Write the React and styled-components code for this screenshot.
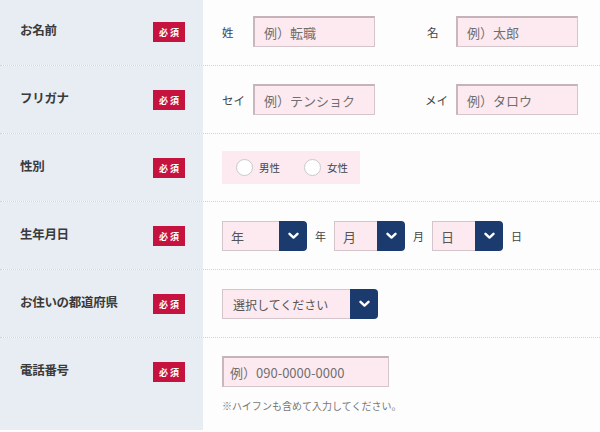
import React from "react";
import styled, { createGlobalStyle } from "styled-components";

const Global = createGlobalStyle`
  html, body { margin: 0; padding: 0; background: #fdfdfd; overflow: hidden; }
  body { font-family: "Noto Sans CJK JP", "Noto Sans", sans-serif; color: #333; }
  * { box-sizing: border-box; }
`;

const Form = styled.div`
  width: 600px;
  height: 432px;
  display: flex;
  flex-direction: column;
  margin-top: -2px;
`;

const Row = styled.div`
  display: flex;
  height: ${(p) => p.$h || 68}px;
  flex: ${(p) => (p.$grow ? 1 : "none")};
  border-bottom: ${(p) => (p.$last ? "none" : "1px dotted #cfd3d9")};
`;

const LabelCell = styled.div`
  width: 203px;
  flex: none;
  background: #e8edf4;
  display: flex;
  justify-content: space-between;
  align-items: flex-start;
  padding: 22px 18px 0 20px;
`;

const LabelText = styled.span`
  font-size: 12.5px;
  font-weight: 700;
  line-height: 20px;
  color: #3a3a3a;
  letter-spacing: -0.3px;
`;

const Badge = styled.span`
  width: 32px;
  height: 20px;
  margin-top: 2px;
  background: #c5123f;
  color: #fff;
  font-size: 9px;
  font-weight: 700;
  display: flex;
  align-items: center;
  justify-content: center;
  letter-spacing: 2px;
  padding-left: 2px;
`;

const FieldCell = styled.div`
  flex: 1;
  padding: 18px 0 0 19px;
  display: flex;
  flex-direction: column;
  align-items: flex-start;
`;

const Line = styled.div`
  display: flex;
  align-items: center;
  gap: ${(p) => p.$gap || 0}px;
`;

const Group = styled.div`
  display: flex;
  align-items: center;
`;

const Prefix = styled.span`
  width: 31px;
  font-size: 11.5px;
  color: #444;
  padding-left: ${(p) => p.$pl || 0}px;
`;

const TextBox = styled.div`
  width: ${(p) => p.$w}px;
  height: 31px;
  background: #fdeaf1;
  border: 1px solid #d5c6cc;
  border-top: 2px solid #c4b4ba;
  border-left: 2px solid #c8b8be;
  display: flex;
  align-items: center;
  padding-left: ${(p) => p.$pl || 8}px;
  font-size: 13px;
  color: #6f6f6f;
`;

const GenderBox = styled.div`
  width: 138px;
  height: 33px;
  margin-top: -1px;
  background: #fdeaf1;
  display: flex;
  align-items: center;
  padding-left: 14px;
  gap: 24px;
`;

const RadioItem = styled.label`
  display: flex;
  align-items: center;
  gap: 6px;
  font-size: 10.5px;
  color: #444;
`;

const Circle = styled.span`
  width: 17px;
  height: 17px;
  border-radius: 50%;
  background: #fff;
  border: 1px solid #c9c9c9;
`;

const Select = styled.div`
  display: flex;
  height: 30px;
  margin-top: 1px;
`;

const SelectFace = styled.div`
  width: ${(p) => p.$w}px;
  height: 30px;
  background: #fdeaf1;
  border: 1px solid #d3c5ca;
  border-right: none;
  display: flex;
  align-items: center;
  padding-left: ${(p) => p.$pl || 8}px;
  font-size: ${(p) => p.$fs || 13}px;
  color: #555;
`;

const Arrow = styled.div`
  width: 28px;
  height: 30px;
  background: #1b3a6d;
  border-radius: 0 4px 4px 0;
  display: flex;
  align-items: center;
  justify-content: center;
`;

const Unit = styled.span`
  font-size: 11px;
  color: #444;
  margin: 0 8px;
`;

const Note = styled.p`
  margin: 13px 0 0 0;
  font-size: 10px;
  color: #777;
  line-height: 12px;
`;

const Chevron = () => (
  <svg width="11" height="8" viewBox="0 0 11 8">
    <path d="M1.5 1.8 L5.5 5.6 L9.5 1.8" fill="none" stroke="#fff" strokeWidth="2.4" strokeLinecap="round" strokeLinejoin="round" />
  </svg>
);

const Label = ({ children }) => (
  <LabelCell>
    <LabelText>{children}</LabelText>
    <Badge>必須</Badge>
  </LabelCell>
);

const DateSelect = ({ text, w }) => (
  <Select>
    <SelectFace $w={w}>{text}</SelectFace>
    <Arrow>
      <Chevron />
    </Arrow>
  </Select>
);

export default function App() {
  return (
    <>
      <Global />
      <Form>
        <Row>
          <Label>お名前</Label>
          <FieldCell>
            <Line $gap={50}>
              <Group>
                <Prefix>姓</Prefix>
                <TextBox $w={122} $pl={9}>例）転職</TextBox>
              </Group>
              <Group>
                <Prefix $pl={2}>名</Prefix>
                <TextBox $w={122} $pl={9}>例）太郎</TextBox>
              </Group>
            </Line>
          </FieldCell>
        </Row>
        <Row>
          <Label>フリガナ</Label>
          <FieldCell>
            <Line $gap={50}>
              <Group>
                <Prefix>セイ</Prefix>
                <TextBox $w={122} $pl={9}>例）テンショク</TextBox>
              </Group>
              <Group>
                <Prefix>メイ</Prefix>
                <TextBox $w={122} $pl={9}>例）タロウ</TextBox>
              </Group>
            </Line>
          </FieldCell>
        </Row>
        <Row>
          <Label>性別</Label>
          <FieldCell>
            <GenderBox>
              <RadioItem>
                <Circle />
                男性
              </RadioItem>
              <RadioItem>
                <Circle />
                女性
              </RadioItem>
            </GenderBox>
          </FieldCell>
        </Row>
        <Row>
          <Label>生年月日</Label>
          <FieldCell>
            <Line>
              <DateSelect text="年" w={57} />
              <Unit>年</Unit>
              <DateSelect text="月" w={43} />
              <Unit>月</Unit>
              <DateSelect text="日" w={43} />
              <Unit>日</Unit>
            </Line>
          </FieldCell>
        </Row>
        <Row>
          <Label>お住いの都道府県</Label>
          <FieldCell>
            <Select>
              <SelectFace $w={128} $pl={10} $fs={12}>選択してください</SelectFace>
              <Arrow>
                <Chevron />
              </Arrow>
            </Select>
          </FieldCell>
        </Row>
        <Row $grow $last>
          <Label>電話番号</Label>
          <FieldCell>
            <TextBox $w={167} $pl={6}>例）090-0000-0000</TextBox>
            <Note>※ハイフンも含めて入力してください。</Note>
          </FieldCell>
        </Row>
      </Form>
    </>
  );
}
